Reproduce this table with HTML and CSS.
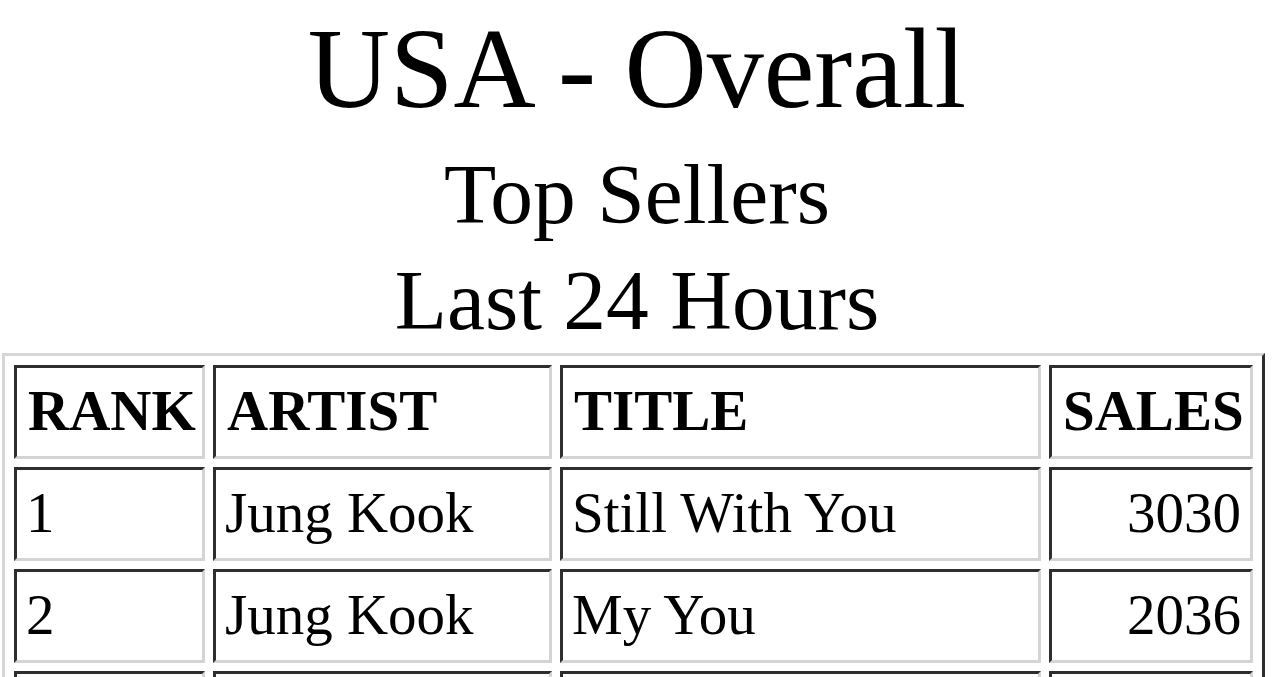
FILE: index.html
```html
<!DOCTYPE html>
<html lang="en">
<head>
<meta charset="utf-8">
<title>USA - Overall</title>
<link rel="stylesheet" href="styles.css">
</head>
<body>
<header class="heading">
  <h1 class="title">USA - Overall</h1>
  <h2 class="subtitle">Top Sellers<br>Last 24 Hours</h2>
</header>
<table class="chart">
  <thead>
    <tr>
      <th class="col-rank">RANK</th>
      <th class="col-artist">ARTIST</th>
      <th class="col-title">TITLE</th>
      <th class="col-sales">SALES</th>
    </tr>
  </thead>
  <tbody>
    <tr>
      <td>1</td>
      <td>Jung Kook</td>
      <td>Still With You</td>
      <td class="num">3030</td>
    </tr>
    <tr>
      <td>2</td>
      <td>Jung Kook</td>
      <td>My You</td>
      <td class="num">2036</td>
    </tr>
    <tr>
      <td>&nbsp;</td>
      <td>&nbsp;</td>
      <td>&nbsp;</td>
      <td class="num">&nbsp;</td>
    </tr>
  </tbody>
</table>
</body>
</html>
```

FILE: styles.css
```css
html, body {
  margin: 0;
  padding: 0;
  background: #ffffff;
}

body {
  font-family: "Liberation Serif", "Times New Roman", serif;
  font-size: 57px;
  color: #000000;
}

.heading {
  text-align: center;
  padding-top: 3px;
}

.title {
  margin: 0;
  font-size: 114px;
  font-weight: normal;
  line-height: normal;
}

.subtitle {
  margin: 6px 0 0 0;
  font-size: 85.5px;
  font-weight: normal;
  line-height: 106px;
}

.chart {
  margin: 0 0 0 2px;
  width: 1263px;
  table-layout: fixed;
  border-collapse: separate;
  border-spacing: 8px;
  padding: 1px;
  border-style: solid;
  border-width: 3px;
  border-color: #d6d6d6 #2e2e2e #2e2e2e #d6d6d6;
}

.chart th,
.chart td {
  box-sizing: border-box;
  border-style: solid;
  border-width: 3px;
  border-color: #2e2e2e #d4d4d4 #d4d4d4 #2e2e2e;
  padding: 11px 9px 14px 9px;
  line-height: 63px;
  text-align: left;
  vertical-align: middle;
  white-space: nowrap;
}

.chart th {
  font-weight: bold;
  padding-left: 11px;
  padding-right: 8px;
}

.col-rank { width: 191px; }
.col-artist { width: 339px; }
.col-title { width: 481px; }
.col-sales { width: 204px; }

.chart td.num {
  text-align: right;
}
```
